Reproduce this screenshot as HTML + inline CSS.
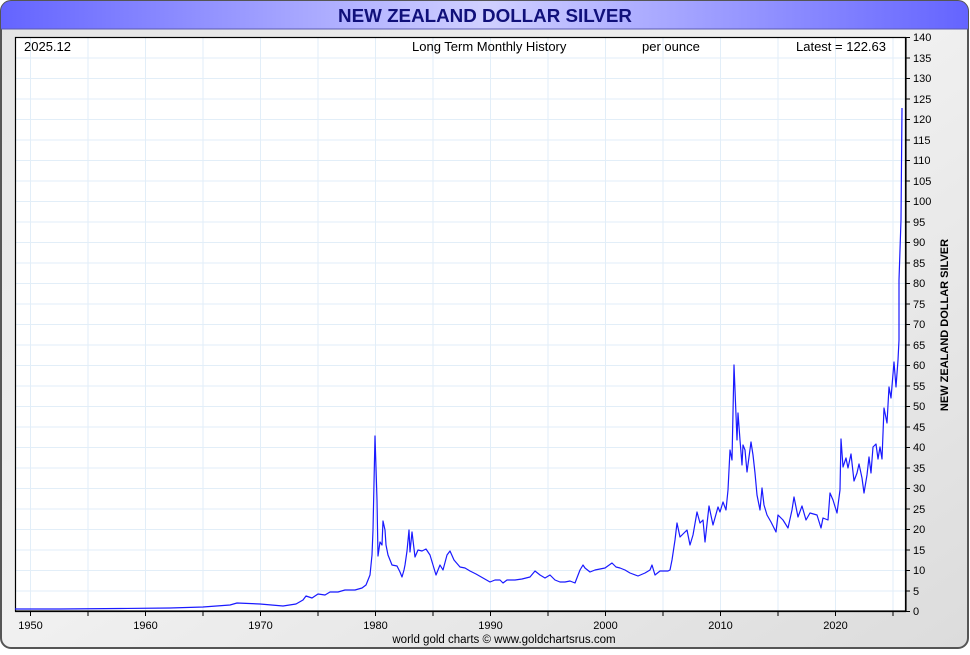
<!DOCTYPE html>
<html><head><meta charset="utf-8"><style>
body{margin:0;width:970px;height:650px;overflow:hidden;background:#fff;font-family:"Liberation Sans",sans-serif}
</style></head><body>
<svg width="970" height="650" xmlns="http://www.w3.org/2000/svg" font-family="Liberation Sans, sans-serif">
<defs>
<linearGradient id="tg" x1="0" x2="1" y1="0" y2="0">
<stop offset="0" stop-color="#6464ff"/><stop offset="0.5" stop-color="#d0d0ff"/><stop offset="1" stop-color="#6464ff"/>
</linearGradient>
<linearGradient id="bg" x1="0" x2="1" y1="0" y2="1">
<stop offset="0" stop-color="#e4e4e4"/><stop offset="0.5" stop-color="#f0f0f0"/><stop offset="1" stop-color="#dcdcdc"/>
</linearGradient>
<pattern id="gv" x="30" y="0" width="57.5" height="650" patternUnits="userSpaceOnUse"><line x1="0.5" y1="0" x2="0.5" y2="650" stroke="#e2eef8" stroke-width="1"/></pattern>
<pattern id="gh" x="0" y="611" width="970" height="20.5" patternUnits="userSpaceOnUse"><line x1="0" y1="0.5" x2="970" y2="0.5" stroke="#e2eef8" stroke-width="1"/></pattern>
</defs>
<rect x="1" y="1" width="967" height="647" rx="10" fill="url(#bg)" stroke="#555" stroke-width="2"/>
<path d="M1,29 V11 A10,10 0 0 1 11,1 H958 A10,10 0 0 1 968,11 V29 Z" fill="url(#tg)"/>
<line x1="1" y1="29" x2="968" y2="29" stroke="#5a5ab0" stroke-width="1"/>
<text x="485" y="22" text-anchor="middle" font-size="18.8" font-weight="bold" fill="#10107a">NEW ZEALAND DOLLAR SILVER</text>
<rect x="15" y="37" width="891" height="574" fill="#fff"/>
<rect x="15" y="37" width="891" height="574" fill="url(#gv)"/>
<rect x="15" y="37" width="891" height="574" fill="url(#gh)"/>
<rect x="15.5" y="37.5" width="890" height="573.5" fill="none" stroke="#000" stroke-width="1.2"/>
<g font-size="13" fill="#000">
<text x="24" y="51">2025.12</text>
<text x="412" y="51">Long Term Monthly History</text>
<text x="642" y="51">per ounce</text>
<text x="796" y="51">Latest = 122.63</text>
</g>
<polyline fill="none" stroke="#1a1aff" stroke-width="1.2" stroke-linejoin="round" points="15,609 60,609 120,608.5 170,608 203,607 230,605 237,603 260,604 283,606 296,604 303,600 306,596 312,598 318,594 325,595 330,592 338,592 345,590 355,590 362,588 366,585 370,575 372,555 373,530 375,436 377,500 378,556 380,542 382,545 383,521 385,530 386,545 388,555 392,565 397,566 400,572 402,577 404,570 405,565 407,551 409,530 410,552 412,532 415,557 418,550 422,551 426,549 430,555 433,565 436,575 440,565 443,570 447,555 450,551 454,560 460,567 465,568 470,571 476,574 483,578 490,582 495,580 500,580 503,583 507,580 515,580 522,579 530,577 535,571 540,575 545,578 550,575 555,580 560,582 565,582 570,581 575,583 580,570 583,565 585,568 590,572 595,570 600,569 605,568 612,563 616,567 620,568 625,570 630,573 638,576 645,573 650,570 652,565 655,575 660,571 668,571 670,570 672,560 675,540 677,523 680,537 683,534 687,530 690,545 693,535 697,512 700,523 703,520 705,542 709,506 713,525 718,507 720,512 723,502 726,510 728,490 730,450 732,460 734,365 737,440 738,413 740,440 742,465 743,445 745,450 747,472 751,442 753,455 755,473 757,495 760,510 762,488 764,505 767,515 771,522 776,532 778,515 783,520 788,528 792,510 794,497 798,517 802,506 806,520 810,513 817,515 821,528 823,518 828,520 830,493 833,500 837,513 840,490 841,439 843,467 846,458 848,468 851,454 854,481 857,473 859,464 862,478 864,493 867,475 869,457 871,473 873,447 876,444 878,459 880,447 882,459 884,408 887,423 889,387 891,398 894,362 896,387 898,360 899,340 899,280 901,220 902,108"/>
<g stroke="#000" stroke-width="1.2">
<line x1="906" y1="37" x2="906" y2="611"/>
<line x1="15" y1="611.5" x2="906" y2="611.5"/>
</g>
<g stroke="#000" stroke-width="1">
<path d="M906,611.5h4M906,591h4M906,570.5h4M906,550h4M906,529.5h4M906,509h4M906,488.5h4M906,468h4M906,447.5h4M906,427h4M906,406.5h4M906,386h4M906,365.5h4M906,345h4M906,324.5h4M906,304h4M906,283.5h4M906,263h4M906,242.5h4M906,222h4M906,201.5h4M906,181h4M906,160.5h4M906,140h4M906,119.5h4M906,99h4M906,78.5h4M906,58h4M906,37.5h4"/>
<path d="M30.5,611v5M88,611v5M145.5,611v5M203,611v5M260.5,611v5M318,611v5M375.5,611v5M433,611v5M490.5,611v5M548,611v5M605.5,611v5M663,611v5M720.5,611v5M778,611v5M835.5,611v5M893,611v5"/>
</g>
<g font-size="11" fill="#000">
<text x="913" y="615">0</text><text x="913" y="595">5</text><text x="913" y="574">10</text><text x="913" y="554">15</text><text x="913" y="533">20</text><text x="913" y="513">25</text><text x="913" y="492">30</text><text x="913" y="472">35</text><text x="913" y="451">40</text><text x="913" y="431">45</text><text x="913" y="410">50</text><text x="913" y="390">55</text><text x="913" y="369">60</text><text x="913" y="349">65</text><text x="913" y="328">70</text><text x="913" y="308">75</text><text x="913" y="287">80</text><text x="913" y="267">85</text><text x="913" y="246">90</text><text x="913" y="226">95</text><text x="913" y="205">100</text><text x="913" y="185">105</text><text x="913" y="164">110</text><text x="913" y="144">115</text><text x="913" y="123">120</text><text x="913" y="103">125</text><text x="913" y="82">130</text><text x="913" y="62">135</text><text x="913" y="41">140</text>
</g>
<text transform="translate(948,325) rotate(-90)" text-anchor="middle" font-size="11" font-weight="bold" fill="#000">NEW ZEALAND DOLLAR SILVER</text>
<g font-size="11" fill="#000" text-anchor="middle">
<text x="30.5" y="629">1950</text><text x="145.5" y="629">1960</text><text x="260.5" y="629">1970</text><text x="375.5" y="629">1980</text><text x="490.5" y="629">1990</text><text x="605.5" y="629">2000</text><text x="720.5" y="629">2010</text><text x="835.5" y="629">2020</text>
</g>
<text x="504" y="643" text-anchor="middle" font-size="11.5" fill="#000">world gold charts © www.goldchartsrus.com</text>
</svg>
</body></html>
